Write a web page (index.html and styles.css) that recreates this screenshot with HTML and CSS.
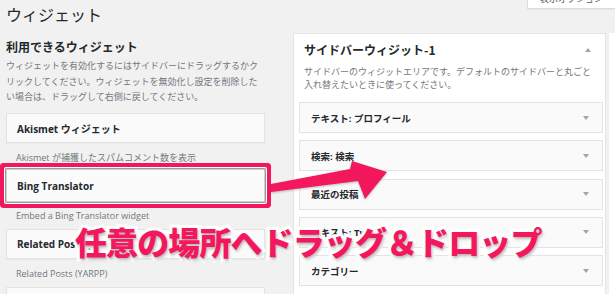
FILE: index.html
```html
<!DOCTYPE html>
<html lang="ja">
<head>
<meta charset="utf-8">
<title>ウィジェット</title>
<link rel="stylesheet" href="styles.css">
</head>
<body>
<div class="page">
  <header class="top">
    <h1 class="title">ウィジェット</h1>
    <div class="screen-options">表示オプション <span class="caret-down"></span></div>
  </header>
  <div class="columns">
    <section class="available">
      <h2 class="section-title">利用できるウィジェット</h2>
      <p class="section-desc">ウィジェットを有効化するにはサイドバーにドラッグするかク<br>リックしてください。ウィジェットを無効化し設定を削除した<br>い場合は、ドラッグして右側に戻してください。</p>
      <div class="widget">Akismet ウィジェット</div>
      <p class="widget-desc">Akismet が捕獲したスパムコメント数を表示</p>
      <div class="widget widget--dragging">Bing Translator</div>
      <p class="widget-desc">Embed a Bing Translator widget</p>
      <div class="widget">Related Posts (YARPP)</div>
      <p class="widget-desc">Related Posts (YARPP)</p>
      <div class="widget">Text</div>
    </section>
    <section class="panel">
      <div class="panel-head">
        <h2 class="panel-title">サイドバーウィジット-1</h2>
        <span class="caret-up"></span>
      </div>
      <p class="panel-desc">サイドバーのウィジットエリアです。デフォルトのサイドバーと丸ごと<br>入れ替えたいときに使ってください。</p>
      <div class="row"><span>テキスト: プロフィール</span><span class="caret-down"></span></div>
      <div class="row"><span>検索: 検索</span><span class="caret-down"></span></div>
      <div class="row"><span>最近の投稿</span><span class="caret-down"></span></div>
      <div class="row"><span>テキスト: Twitter</span><span class="caret-down"></span></div>
      <div class="row"><span>カテゴリー</span><span class="caret-down"></span></div>
    </section>
    <div class="strip"></div>
  </div>

  <svg class="arrow" width="615" height="294" viewBox="0 0 615 294">
    <polygon points="271,184 350,169 352,161 387,172 365,199 358,181 271,192" fill="#f3175d"/>
  </svg>
  <div class="callout">任意の場所へドラッグ＆ドロップ</div>
</div>
</body>
</html>
```

FILE: styles.css
```css
* { box-sizing: border-box; }

html, body {
  margin: 0;
  padding: 0;
}

body {
  background: #f1f1f1;
  font-family: "Open Sans", "Noto Sans CJK JP", sans-serif;
  color: #23282d;
  width: 615px;
  height: 294px;
  overflow: hidden;
}

.page {
  position: relative;
  width: 615px;
  height: 294px;
  overflow: hidden;
}

.top {
  display: flex;
  justify-content: space-between;
  align-items: flex-start;
  height: 33px;
  padding-left: 6px;
}

.title {
  margin: 4px 0 0;
  font-size: 16px;
  line-height: 20px;
  font-weight: 400;
  font-family: "Noto Sans CJK JP", sans-serif;
}

.screen-options {
  margin-top: -8px;
  margin-right: -6px;
  width: 94px;
  height: 17px;
  background: #fff;
  border: 1px solid #dcdcdc;
  border-top: none;
  box-shadow: 0 1px 1px rgba(0,0,0,.04);
  font-size: 9px;
  line-height: 9px;
  padding: 0 0 4px 12px;
  color: #555;
  display: flex;
  align-items: center;
  gap: 6px;
}

.columns {
  display: flex;
  align-items: flex-start;
}

.available {
  width: 259px;
  margin-left: 6px;
}

.section-title {
  margin: 7px 0 4px;
  font-size: 12px;
  line-height: 14px;
  font-weight: 700;
  font-family: "Noto Sans CJK JP", sans-serif;
}

.section-desc {
  margin: 0 0 8.5px;
  font-size: 9px;
  line-height: 15.5px;
  color: #72777c;
  white-space: nowrap;
}

.widget {
  height: 30px;
  background: #fafafa;
  border: 1px solid #e3e3e3;
  box-shadow: 0 1px 1px rgba(0,0,0,.03);
  padding: 0 10px;
  display: flex;
  align-items: center;
  font-size: 10px;
  font-weight: 700;
}

.widget--dragging {
  height: 35px;
  margin: -3px -1px -2px;
  padding-left: 11px;
  background: #fbfbfb;
  border: 1px solid #9a9a9a;
  border-radius: 1px;
  box-shadow: inset 0 0 0 1px #cfcfcf, 0 0 0 1px #fff, 0 0 0 5px #f3175d;
}

.widget-desc {
  margin: 0;
  padding: 7px 10px 6px;
  font-size: 9px;
  line-height: 15px;
  color: #72777c;
  white-space: nowrap;
}

.panel {
  width: 313px;
  margin-left: 28px;
  background: #fff;
  border: 1px solid #e5e5e5;
  box-shadow: 0 1px 1px rgba(0,0,0,.04);
  padding: 9px 2px 20px 5px;
}

.panel-head {
  display: flex;
  justify-content: space-between;
  align-items: center;
  padding: 0 12px 0 5px;
}

.panel-title {
  margin: 0;
  font-size: 12px;
  line-height: 14px;
  font-weight: 700;
  font-family: "Noto Sans CJK JP", sans-serif;
}

.panel-desc {
  margin: 7.5px 0 11.5px;
  padding-left: 5px;
  font-size: 9px;
  line-height: 13px;
  color: #72777c;
  white-space: nowrap;
}

.row {
  height: 31px;
  margin-bottom: 7.3px;
  background: #fafafa;
  border: 1px solid #e3e3e3;
  display: flex;
  align-items: center;
  justify-content: space-between;
  padding: 0 13px 0 11px;
  font-size: 9.5px;
  font-weight: 700;
}

.caret-down {
  width: 0;
  height: 0;
  border-left: 3px solid transparent;
  border-right: 3px solid transparent;
  border-top: 4px solid #a0a5aa;
}

.caret-up {
  width: 0;
  height: 0;
  border-left: 3px solid transparent;
  border-right: 3px solid transparent;
  border-bottom: 4px solid #a0a5aa;
}

.strip {
  flex: 1;
  margin-left: 3px;
  height: 270px;
  background: #fff;
}

.arrow {
  position: absolute;
  left: 0;
  top: 0;
  filter: drop-shadow(0 1px 1px rgba(0,0,0,.25));
  pointer-events: none;
}

.callout {
  position: absolute;
  left: 75px;
  top: 221px;
  font-family: "Noto Sans CJK JP", sans-serif;
  font-size: 32px;
  line-height: 40px;
  font-weight: 900;
  letter-spacing: -0.9px;
  color: #f3175d;
  -webkit-text-stroke: 6px #fff;
  paint-order: stroke fill;
  text-shadow: 1px 2px 3px rgba(0,0,0,.3);
  white-space: nowrap;
}
```
